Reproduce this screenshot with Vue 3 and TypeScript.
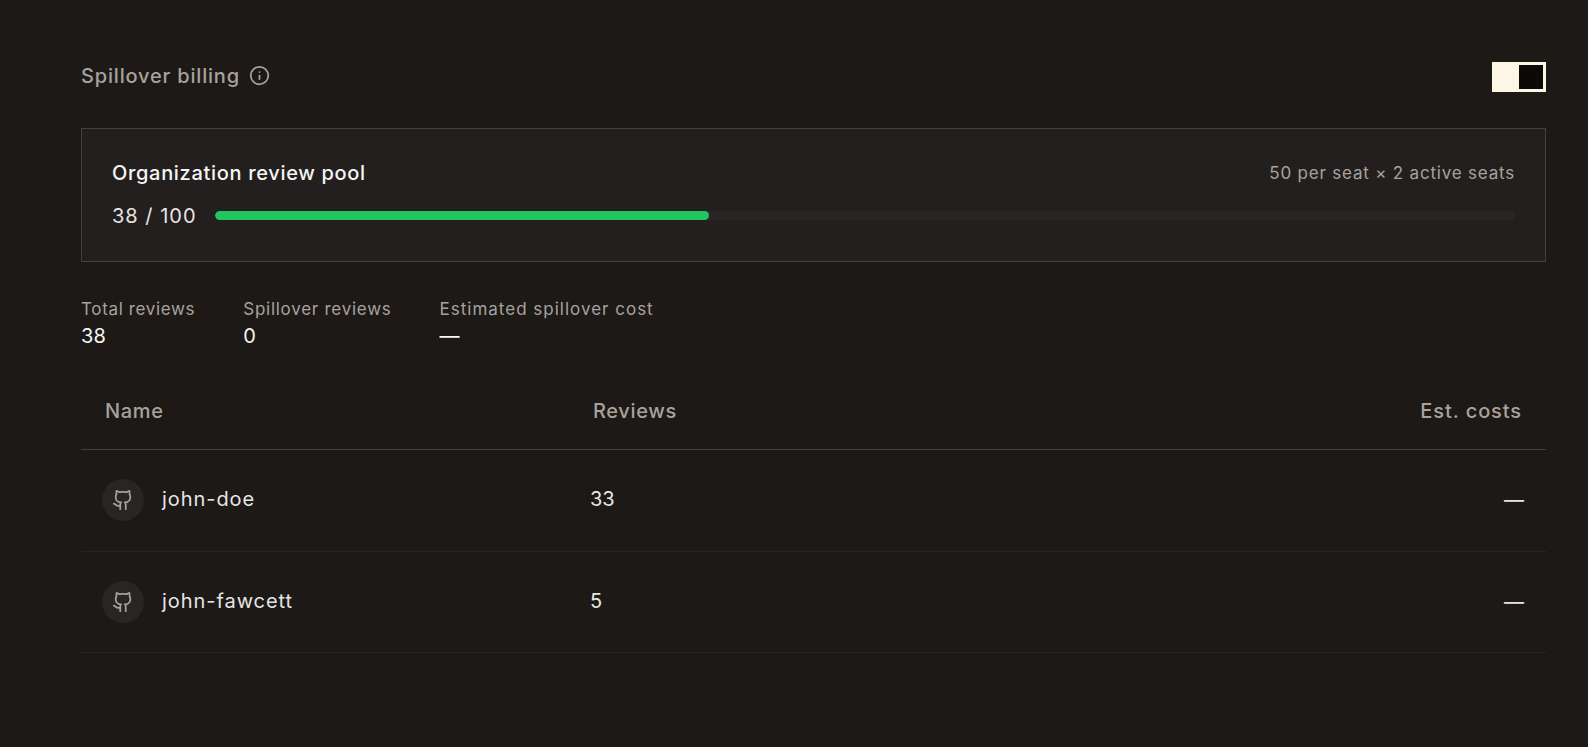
<script setup lang="ts">
const stats = [
  { label: 'Total reviews', value: '38' },
  { label: 'Spillover reviews', value: '0' },
  { label: 'Estimated spillover cost', value: '—' },
]
const rows = [
  { name: 'john-doe', reviews: 33, cost: '—' },
  { name: 'john-fawcett', reviews: 5, cost: '—' },
]
const usedPct = 38
</script>

<template>
  <main class="page">
    <header class="top">
      <div class="heading">
        <span>Spillover billing</span>
        <svg class="info" viewBox="0 0 24 24" fill="none" stroke="currentColor" stroke-width="2" stroke-linecap="round" stroke-linejoin="round">
          <circle cx="12" cy="12" r="10" />
          <path d="M12 16v-4" />
          <path d="M12 8h.01" />
        </svg>
      </div>
      <div class="toggle"><span class="knob"></span></div>
    </header>

    <section class="card">
      <div class="card-head">
        <span class="card-title">Organization review pool</span>
        <span class="card-note">50 per seat × 2 active seats</span>
      </div>
      <div class="usage">
        <span class="count">38 / 100</span>
        <div class="track"><div class="fill" :style="{ width: usedPct + '%' }"></div></div>
      </div>
    </section>

    <section class="stats">
      <div v-for="s in stats" :key="s.label" class="stat">
        <div class="stat-label">{{ s.label }}</div>
        <div class="stat-value">{{ s.value }}</div>
      </div>
    </section>

    <section class="table">
      <div class="row head">
        <span class="c-name">Name</span>
        <span class="c-rev">Reviews</span>
        <span class="c-cost">Est. costs</span>
      </div>
      <div v-for="r in rows" :key="r.name" class="row body">
        <span class="c-name user">
          <span class="avatar">
            <svg viewBox="0 0 24 24" fill="none" stroke="currentColor" stroke-width="1.9" stroke-linecap="round" stroke-linejoin="round">
              <path d="M15 22v-4a4.8 4.8 0 0 0-1-3.5c3 0 6-2 6-5.500.08-1.250-.270-2.480-1-3.500.280-1.150.280-2.350 0-3.500 0 0-1 0-3 1.500-2.640-.500-5.360-.500-8 0C6 2 5 2 5 2c-.300 1.150-.300 2.350 0 3.500A5.403 5.403 0 0 0 4 9c0 3.500 3 5.500 6 5.500-.390.490-.680 1.050-.850 1.650-.170.600-.220 1.230-.150 1.850v4" />
              <path d="M9 18c-4.510 2-5-2-7-2" />
            </svg>
          </span>
          <span class="uname">{{ r.name }}</span>
        </span>
        <span class="c-rev num">{{ r.reviews }}</span>
        <span class="c-cost">{{ r.cost }}</span>
      </div>
    </section>
  </main>
</template>

<style>
html, body { background: #1c1917; }
</style>

<style scoped>
.page {
  box-sizing: border-box;
  width: 1588px;
  height: 747px;
  padding: 61px 42px 0 81px;
  background: #1c1917;
  font-family: Inter, "Noto Sans", sans-serif;
  color: #f5f5f4;
  overflow: hidden;
}
.top { display: flex; align-items: center; justify-content: space-between; height: 31px; }
.heading { display: flex; align-items: center; gap: 9px; margin-bottom: 2px; font-size: 20px; font-weight: 500; letter-spacing: 0.82px; color: #a8a29e; }
.info { width: 21px; height: 21px; }
.toggle {
  box-sizing: border-box;
  width: 54px;
  height: 30px;
  padding: 3px;
  display: flex;
  justify-content: flex-end;
  background: #fef6e4;
}
.knob { width: 24px; height: 24px; background: #0c0a09; }
.card {
  box-sizing: border-box;
  margin-top: 36px;
  height: 134px;
  padding: 30px;
  border: 1px solid #44403c;
  background: #231f1e;
}
.card-head { display: flex; align-items: center; justify-content: space-between; height: 28px; }
.card-title { font-size: 20px; font-weight: 500; letter-spacing: 0.68px; color: #f5f5f4; }
.card-note { font-size: 17px; letter-spacing: 0.8px; color: #a8a29e; }
.usage { display: flex; align-items: center; gap: 18px; margin-top: 15px; height: 28px; }
.count { font-size: 20px; letter-spacing: 1px; color: #e7e5e4; white-space: nowrap; }
.track { flex: 1; height: 9px; margin-bottom: 2px; border-radius: 5px; background: #292524; overflow: hidden; }
.fill { height: 100%; border-radius: 5px; background: #22c55e; }
.stats { display: flex; gap: 48px; margin-top: 35px; }
.stat-label { font-size: 17px; line-height: 24px; letter-spacing: 0.65px; color: #a8a29e; }
.stat:nth-child(2) .stat-label { letter-spacing: 0.74px; }
.stat:nth-child(3) .stat-label { letter-spacing: 1px; }
.stat-value { font-size: 20px; line-height: 30px; letter-spacing: 0.2px; color: #f5f5f4; }
.table { margin-top: 22px; }
.row { display: grid; grid-template-columns: 488px 1fr auto; align-items: center; }
.head {
  height: 76px;
  padding: 0 24px;
  border-bottom: 1px solid #44403c;
  font-size: 20px;
  font-weight: 500;
  letter-spacing: 0.65px;
  color: #a8a29e;
}
.head .c-cost { letter-spacing: 0.9px; }
.body {
  height: 100.5px;
  padding: 0 22px 0 21px;
  border-bottom: 1px solid #292524;
  font-size: 20px;
  color: #e7e5e4;
}
.user { display: flex; align-items: center; gap: 18px; }
.uname { margin-bottom: 2px; letter-spacing: 0.95px; }
.avatar {
  width: 42px;
  height: 42px;
  border-radius: 50%;
  background: #292524;
  display: flex;
  align-items: center;
  justify-content: center;
  color: #a8a29e;
}
.avatar svg { width: 22px; height: 22px; }
.num { margin-bottom: 2px; font-size: 20px; }
.c-cost { text-align: right; }
</style>
